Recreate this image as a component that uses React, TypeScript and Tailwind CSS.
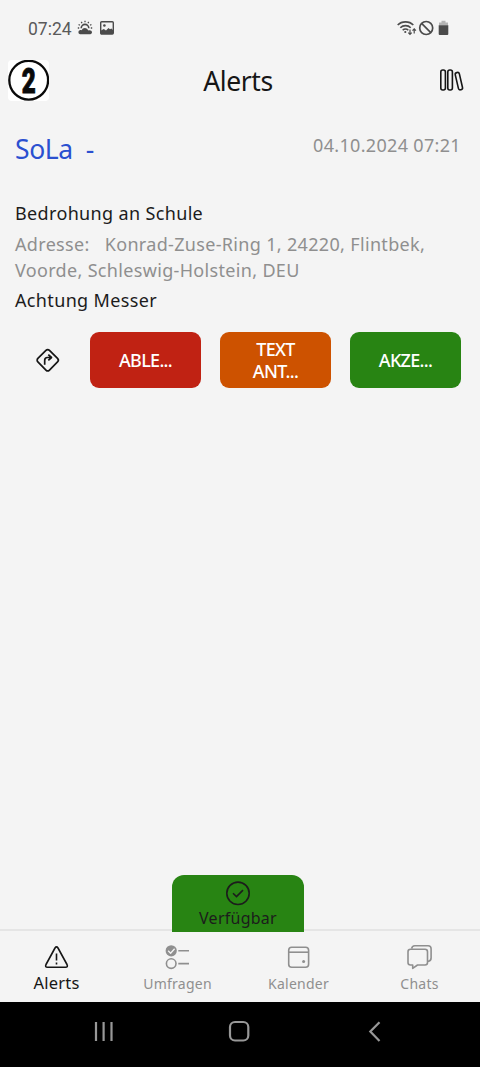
import type { ReactNode } from "react";
import { clsx } from "clsx";

interface TabProps {
  label: string;
  active?: boolean;
  children: ReactNode;
}

function StatusBar() {
  return (
    <div className="flex h-14 items-center justify-between pr-[30px] pl-7 text-[#4b4b4b]">
      <div className="flex items-center">
        <span className="w-[43px] pt-px font-['Roboto',sans-serif] text-[17.5px] leading-5 whitespace-nowrap text-[#5a5a5a]">07:24</span>
        {/* Weather */}
        <svg className="ml-[6px] h-4 w-4" viewBox="0 0 16 16" fill="none">
          <path d="M8 .8v1.500M4.300 1.900l.7 1.300M11.700 1.900l-.7 1.300M1.600 4.500l1.300.8M14.400 4.500l-1.300.8M.8 8h1.400M13.800 8h1.400" stroke="currentColor" strokeWidth="1.300" />
          <path d="M4.200 8.200a3.800 3.800 0 0 1 7.600 0" stroke="currentColor" strokeWidth="1.600" />
          <path d="M3 14.200a2.200 2.200 0 0 1 .2-4.300c.6 0 1 .1 1.400.3a3.600 3.600 0 0 1 6.700.2c2-.5 3.700.3 3.700 1.900 0 1.100-.7 1.900-1.700 1.900z" fill="currentColor" />
        </svg>
        {/* Picture */}
        <svg className="ml-[7px] h-[14px] w-[14px]" viewBox="0 0 14 14">
          <rect x=".7" y=".8" width="12.600" height="12.200" rx="1" fill="none" stroke="currentColor" strokeWidth="1.400" />
          <circle cx="4.400" cy="4.500" r="1.300" fill="currentColor" />
          <path d="M1 9.500l2.800-1.500 2.200 1.500 2.500-2.500 1.500 1.300 1.300-.8 1.700 1.500V13H1z" fill="currentColor" />
        </svg>
      </div>
      <div className="flex items-center">
        {/* Wifi */}
        <svg className="h-4 w-5" viewBox="0 0 20 16" fill="none" stroke="currentColor" strokeWidth="1.600">
          <path d="M.7 5c4-4.200 11.600-4.200 15.600 0M3.300 7.700c2.800-2.800 7.700-2.800 10.400 0M5.700 10.200c1.600-1.600 4-1.600 5.600 0" />
          <circle cx="8.300" cy="12" r="1.100" fill="currentColor" stroke="none" />
          <path d="M13 9.500v5M11.300 12.700l1.700 1.700 1.700-1.700M17.200 13.500v-4.500M15.500 10.600l1.700-1.700 1.700 1.700" strokeWidth="1.200" />
        </svg>
        <svg className="ml-px h-4 w-4" viewBox="0 0 16 16" fill="none" stroke="currentColor" strokeWidth="1.700">
          <circle cx="8.200" cy="8" r="6.500" />
          <path d="M3.600 3.400l9.200 9.200" />
        </svg>
        {/* Battery */}
        <svg className="ml-1 h-4 w-3" viewBox="0 0 12 16">
          <path d="M1 2.500h2.500V.8h4v1.700h2.500v3h-9z" fill="#b3b3b3" />
          <path d="M.7 5.300h9.600v8.700q0 1-1 1h-7.600q-1 0-1-1z" fill="currentColor" />
        </svg>
      </div>
    </div>
  );
}

function Header() {
  return (
    <header className="grid h-12 grid-cols-[60px_1fr_64px] items-center">
      <div className="ml-2 h-[41px] w-[41px] rounded bg-white">
        <svg className="h-[41px] w-[41px]" viewBox="0 0 41 41">
          <circle cx="20.700" cy="20.200" r="19.400" fill="none" stroke="#0a0a0a" strokeWidth="2.300" />
          <text
            x="0"
            y="0"
            transform="translate(20.700 33) scale(.69 1)"
            textAnchor="middle"
            fill="#0a0a0a"
            stroke="#0a0a0a"
            strokeWidth="1"
            className="font-['Roboto',sans-serif] text-[35px] font-black"
          >
            2
          </text>
        </svg>
      </div>
      <h1 className="pt-[2px] text-center text-[26.5px] leading-9 tracking-[-0.4px] text-[#161616]">Alerts</h1>
      <svg className="ml-6 h-6 w-6" viewBox="0 0 24 24" fill="none" stroke="#161616" strokeWidth="1.600">
        <rect x=".8" y="2" width="4.600" height="20" rx="2" />
        <rect x="7.800" y="2" width="4.600" height="20" rx="2" />
        <rect x="16.800" y="4.300" width="4.200" height="17.700" rx="1.900" transform="rotate(-13 19 13.200)" />
      </svg>
    </header>
  );
}

function ActionButton({ label, className }: { label: string; className: string }) {
  return (
    <button
      className={clsx(
        "flex h-14 w-[111px] items-center justify-center rounded-[9px] text-[18px] leading-[22px] font-medium tracking-[-0.7px] whitespace-pre-line text-white",
        className
      )}
    >
      {label}
    </button>
  );
}

function AlertCard() {
  return (
    <article className="px-[15px] pt-[26px]">
      <div className="flex items-start justify-between">
        <h2 className="pt-px text-[26.5px] leading-9 tracking-[-0.4px] whitespace-pre text-[#2b50d0]">{"SoLa  -"}</h2>
        <time className="mr-1 text-[18px] leading-[30px] tracking-[0.33px] text-[#8f8f8f]">04.10.2024 07:21</time>
      </div>
      <p className="mt-[33px] text-[18px] leading-[26px] tracking-[0.35px] text-[#1c1c1c]">Bedrohung an Schule</p>
      <p className="mt-[5px] text-[18px] leading-[26px] tracking-[0.33px] whitespace-pre text-[#8f8f8f]">
        {"Adresse:   Konrad-Zuse-Ring 1, 24220, Flintbek,\nVoorde, Schleswig-Holstein, DEU"}
      </p>
      <p className="mt-1 text-[18px] leading-[26px] tracking-[0.35px] text-[#1c1c1c]">Achtung Messer</p>
      <div className="mt-[19px] flex items-center">
        {/* Directions */}
        <svg className="mr-[29px] ml-5 h-[26px] w-[26px]" viewBox="0 0 26 26" fill="none" stroke="#161616" strokeWidth="1.700" strokeLinejoin="round">
          <rect x="4.500" y="5" width="16.400" height="16.400" rx="2.500" transform="rotate(45 12.700 13.200)" />
          <path d="M9.700 17.700v-4.500q0-2.700 2.700-2.700h3.600M13.300 7.600l3.200 2.900-3.200 2.900" />
        </svg>
        <div className="flex gap-[19px]">
          <ActionButton label="ABLE..." className="bg-[#c02213]" />
          <ActionButton label={"TEXT\nANT..."} className="bg-[#cd5200]" />
          <ActionButton label="AKZE..." className="bg-[#288413]" />
        </div>
      </div>
    </article>
  );
}

function Tab({ label, active, children }: TabProps) {
  return (
    <div className={clsx("flex w-[121px] flex-col items-center pt-3", active ? "text-[#161616]" : "text-[#8f8f8f]")}>
      <svg className="h-7 w-7" viewBox="0 0 28 28" fill="none" stroke="currentColor" strokeWidth="1.600" strokeLinejoin="round">
        {children}
      </svg>
      <span className={clsx("leading-6", active ? "text-[16.5px] tracking-[0.2px]" : "mt-px text-[14px] tracking-[0.25px]")}>{label}</span>
    </div>
  );
}

function TabBar() {
  return (
    <nav className="-ml-1 flex h-[71px]">
      <Tab label="Alerts" active>
        <path d="M12 5 3 21.500q-1.200 2.800 1.500 2.800h18q2.700 0 1.500-2.800L15 5q-1.500-2.200-3 0z" />
        <path d="M13.500 10.500v7M13.500 19.500v2" />
      </Tab>
      <Tab label="Umfragen">
        <circle cx="7.200" cy="7.800" r="5.600" fill="currentColor" stroke="none" />
        <path d="M4.200 7.800l2.400 2.400 4-4.500" stroke="#f4f4f4" strokeWidth="1.300" />
        <circle cx="7.200" cy="20.600" r="4.800" />
        <path d="M14.300 7.800h10.700M14.300 20.600h10.700" />
      </Tab>
      <Tab label="Kalender">
        <rect x="3.700" y="4.300" width="19.900" height="20" rx="3" />
        <path d="M3.700 9.200h19.900" />
        <circle cx="18.600" cy="18.600" r="1.500" fill="currentColor" stroke="none" />
      </Tab>
      <Tab label="Chats">
        <path d="M4.500 6.200h14.500q2.500 0 2.500 2.500v10.800q0 2.500-2.500 2.500H11.500l-4.800 3.300V22H4.500Q2 22 2 19.500V8.700Q2 6.200 4.500 6.200z" />
        <path d="M5.700 5.700Q6 2.800 8.800 2.800h13.300q3 0 3 3v9.200q0 3-3.300 3.500" />
      </Tab>
    </nav>
  );
}

function SystemNav() {
  return (
    <div className="flex h-[65px] items-start justify-between bg-black pt-[18px] pr-[95px] pl-[93px] text-[#989898]">
      <svg className="h-[22px] w-[22px]" viewBox="0 0 22 22" stroke="currentColor" strokeWidth="2.200">
        <path d="M3 2v19M10.600 2v19M18.500 2v19" />
      </svg>
      <svg className="h-[22px] w-[22px]" viewBox="0 0 22 22" fill="none" stroke="currentColor" strokeWidth="2.200">
        <rect x="2" y="2" width="18.300" height="18.500" rx="5" />
      </svg>
      <svg className="h-[22px] w-[22px]" viewBox="0 0 22 22" fill="none" stroke="currentColor" strokeWidth="2.200">
        <path d="M16.500 2.200 7.300 11.600 16.500 21" />
      </svg>
    </div>
  );
}

export default function App() {
  return (
    <div className="flex h-[1067px] w-[480px] flex-col overflow-hidden bg-[#f4f4f4] font-['Noto_Sans',sans-serif]">
      <StatusBar />
      <Header />
      <main className="flex-1">
        <AlertCard />
      </main>
      <div className="relative z-10 -mb-[3px] ml-[172px] flex h-[57px] w-[132px] flex-col items-center rounded-t-xl bg-[#288413] pt-[5px] text-[#1c1c1c]">
        <svg className="h-[26px] w-[26px]" viewBox="0 0 26 26" fill="none" stroke="currentColor" strokeWidth="1.600">
          <circle cx="13" cy="13.300" r="11.200" />
          <path d="M8 13.200l3.500 3.400 6.500-6.500" />
        </svg>
        <span className="mt-px text-[16px] leading-[22px] tracking-[0.25px]">Verfügbar</span>
      </div>
      <div className="border-t-2 border-[#e5e5e5]">
        <TabBar />
      </div>
      <SystemNav />
    </div>
  );
}
